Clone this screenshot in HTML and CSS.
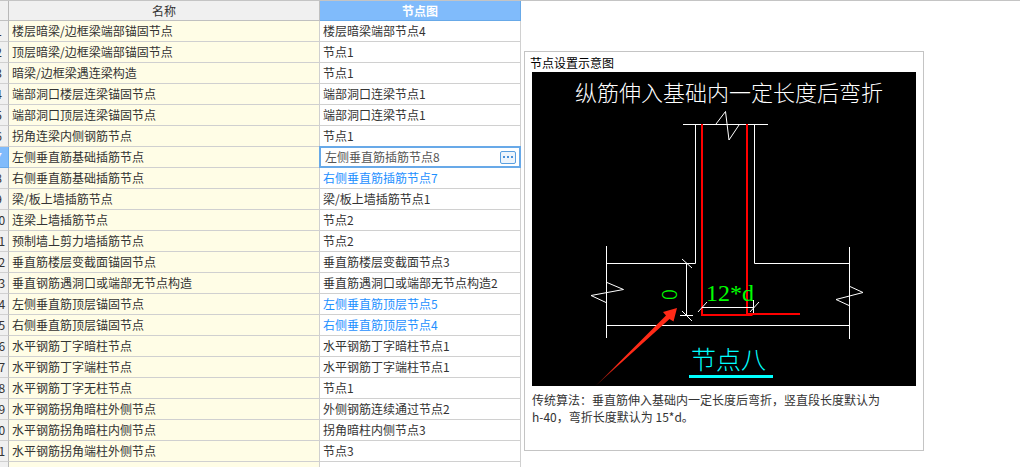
FILE: index.html
```html
<!DOCTYPE html>
<html lang="zh-CN">
<head>
<meta charset="utf-8">
<title>节点设置</title>
<link rel="stylesheet" href="styles.css">
</head>
<body>
<main class="workspace">
  <section class="grid-pane">
    <table class="grid">
      <colgroup><col class="col-index"><col class="col-name"><col class="col-node"></colgroup>
      <thead>
        <tr><th class="index"></th><th>名称</th><th class="active">节点图</th></tr>
      </thead>
      <tbody>
        <tr><th class="index">1</th><td class="name">楼层暗梁/边框梁端部锚固节点</td><td>楼层暗梁端部节点4</td></tr>
        <tr><th class="index">2</th><td class="name">顶层暗梁/边框梁端部锚固节点</td><td>节点1</td></tr>
        <tr><th class="index">3</th><td class="name">暗梁/边框梁遇连梁构造</td><td>节点1</td></tr>
        <tr><th class="index">4</th><td class="name">端部洞口楼层连梁锚固节点</td><td>端部洞口连梁节点1</td></tr>
        <tr><th class="index">5</th><td class="name">端部洞口顶层连梁锚固节点</td><td>端部洞口连梁节点1</td></tr>
        <tr><th class="index">6</th><td class="name">拐角连梁内侧钢筋节点</td><td>节点1</td></tr>
        <tr><th class="index active">7</th><td class="name">左侧垂直筋基础插筋节点</td><td class="editing"><div class="editor"><input class="editor-input" type="text" value="左侧垂直筋插筋节点8" aria-label="节点图"><button class="editor-more" type="button" aria-label="更多"><span class="dot"></span><span class="dot"></span><span class="dot"></span></button></div></td></tr>
        <tr><th class="index">8</th><td class="name">右侧垂直筋基础插筋节点</td><td class="changed">右侧垂直筋插筋节点7</td></tr>
        <tr><th class="index">9</th><td class="name">梁/板上墙插筋节点</td><td>梁/板上墙插筋节点1</td></tr>
        <tr><th class="index">10</th><td class="name">连梁上墙插筋节点</td><td>节点2</td></tr>
        <tr><th class="index">11</th><td class="name">预制墙上剪力墙插筋节点</td><td>节点2</td></tr>
        <tr><th class="index">12</th><td class="name">垂直筋楼层变截面锚固节点</td><td>垂直筋楼层变截面节点3</td></tr>
        <tr><th class="index">13</th><td class="name">垂直钢筋遇洞口或端部无节点构造</td><td>垂直筋遇洞口或端部无节点构造2</td></tr>
        <tr><th class="index">14</th><td class="name">左侧垂直筋顶层锚固节点</td><td class="changed">左侧垂直筋顶层节点5</td></tr>
        <tr><th class="index">15</th><td class="name">右侧垂直筋顶层锚固节点</td><td class="changed">右侧垂直筋顶层节点4</td></tr>
        <tr><th class="index">16</th><td class="name">水平钢筋丁字暗柱节点</td><td>水平钢筋丁字暗柱节点1</td></tr>
        <tr><th class="index">17</th><td class="name">水平钢筋丁字端柱节点</td><td>水平钢筋丁字端柱节点1</td></tr>
        <tr><th class="index">18</th><td class="name">水平钢筋丁字无柱节点</td><td>节点1</td></tr>
        <tr><th class="index">19</th><td class="name">水平钢筋拐角暗柱外侧节点</td><td>外侧钢筋连续通过节点2</td></tr>
        <tr><th class="index">20</th><td class="name">水平钢筋拐角暗柱内侧节点</td><td>拐角暗柱内侧节点3</td></tr>
        <tr><th class="index">21</th><td class="name">水平钢筋拐角端柱外侧节点</td><td>节点3</td></tr>
        <tr><th class="index"></th><td class="name"></td><td></td></tr>
      </tbody>
    </table>
  </section>
  <aside class="preview">
    <h2 class="preview-title">节点设置示意图</h2>
    <svg class="drawing" viewBox="0 0 384 314" role="img" aria-label="节点八">
      <defs>
        <linearGradient id="arrow-fade" gradientUnits="userSpaceOnUse" x1="64" y1="314" x2="145" y2="236">
          <stop offset="0" stop-color="#ff2a17" stop-opacity="0.4"/>
          <stop offset="0.3" stop-color="#ff2a17"/>
        </linearGradient>
      </defs>
      <rect width="384" height="314"/>
      <text class="caption" x="43" y="29">纵筋伸入基础内一定长度后弯折</text>
      <g class="outline">
        <path d="M151 52.5H236M163.5 52V191.5H74.5M222.5 52V191.5H317.5M74.5 174V266M317.5 175V267M74.5 253.5H317.5"/>
        <path d="M184 52L193.500 39.500L197 68L207 53"/>
        <path d="M75 210.500L91.500 217.500L59 223.500L74 230.500M318 214.500L331 220.500L304 227.500L317 233.500"/>
      </g>
      <path class="rebar" d="M170 52V243H220.500M215 52V242H268"/>
      <text class="dimension" x="174" y="229">12*d</text>
      <text class="dimension-side" transform="translate(145 228) rotate(-90)">0</text>
      <g class="outline">
        <path d="M154.5 191V244M148 243.5H161M170 235.5H222M221.5 228V241"/>
        <path d="M150 187L160 196M150 239L160 249M166 240L175 230M218 240L227 230"/>
      </g>
      <path fill="url(#arrow-fade)" d="M145 236L131 240L134 243.500L63.500 314L137.500 247L141.500 249.500Z"/>
      <text class="label" x="159" y="297">节点八</text>
      <rect class="underline" x="157" y="303" width="84" height="3"/>
    </svg>
    <p class="description">传统算法：垂直筋伸入基础内一定长度后弯折，竖直段长度默认为 <span class="term">h-40，</span>弯折长度默认为 15*d。</p>
  </aside>
</main>
</body>
</html>
```
FILE: styles.css
```css
* {
  box-sizing: border-box;
}

body {
  margin: 0;
  height: 100vh;
  overflow: hidden;
  background: #fff;
  color: #333;
  font: 12px/20px "Noto Sans CJK SC", sans-serif;
}

.workspace {
  display: flex;
  align-items: flex-start;
  gap: 3px;
  border-top: 1px solid #c4c4c4;
}

/* The index column is scrolled partly out of view. */
.grid-pane {
  flex: none;
  margin-left: -11px;
}

.grid {
  width: 532px;
  table-layout: fixed;
  border-collapse: separate;
  border-spacing: 0;
}

.col-index {
  width: 20px;
}

.col-name {
  width: 311px;
}

.grid th,
.grid td {
  height: 21px;
  padding: 0 3px;
  border: solid #d0d0d0;
  border-width: 0 1px 1px 0;
  font-weight: 400;
  text-align: left;
  white-space: nowrap;
}

.grid thead th {
  height: 20px;
  line-height: 19px;
  background: #f0f0f0;
  border-color: #c0c0c0;
  text-align: center;
}

.grid thead .active {
  background: #80bbfb;
  border-color: #68a9e8;
  color: #fff;
  font-weight: 700;
}

.grid .index {
  padding: 0;
  background: #f0f0f0;
  border-right-color: #b8b8b8;
  text-align: center;
}

.grid .index.active {
  background: #80bbfb;
  border-color: #68a9e8;
  color: #fff;
}

.grid .name {
  background: #fffde6;
}

.grid .changed {
  color: #1e90ff;
}

.grid .editing {
  position: relative;
}

.editor {
  position: absolute;
  inset: -1px;
  display: flex;
  align-items: center;
  padding: 0 3px 0 4px;
  border: 2px solid #68a9e8;
  background: #fff;
}

.editor-input {
  flex: 1;
  min-width: 0;
  height: 18px;
  padding: 0;
  border: 0;
  outline: 0;
  background: none;
  color: #555;
  font: inherit;
}

.editor-more {
  display: flex;
  align-items: center;
  justify-content: center;
  gap: 2px;
  width: 16px;
  height: 13px;
  padding: 0;
  border: 1px solid #5a9fe0;
  border-radius: 2px;
  background: #eef5fc;
}

.dot {
  width: 2px;
  height: 2px;
  background: #4a90d9;
}

.preview {
  flex: 0 1 400px;
  min-height: 400px;
  margin-top: 50px;
  border: 1px solid #c4c4c4;
}

.preview-title {
  margin: 0;
  padding: 2px 5px 0;
  color: #000;
  font-size: 12px;
  font-weight: 400;
  line-height: 18px;
}

.drawing {
  display: block;
  width: auto;
  margin: 0 7px;
}

.description {
  margin: 5px 7px 0;
  line-height: 17px;
}

.term {
  display: inline-block;
}

.outline {
  fill: none;
  stroke: #fff;
  stroke-width: 1;
}

.rebar {
  fill: none;
  stroke: #f00;
  stroke-width: 2;
}

.caption {
  fill: #fff;
  font-size: 22px;
  font-weight: 300;
}

.dimension {
  fill: #0f0;
  font-family: "Liberation Serif", serif;
  font-size: 24px;
}

.dimension-side {
  fill: #0f0;
  font-size: 20px;
  font-weight: 300;
}

.label {
  fill: #0ff;
  font-size: 25px;
  font-weight: 300;
}

.underline {
  fill: #0ff;
}
```
